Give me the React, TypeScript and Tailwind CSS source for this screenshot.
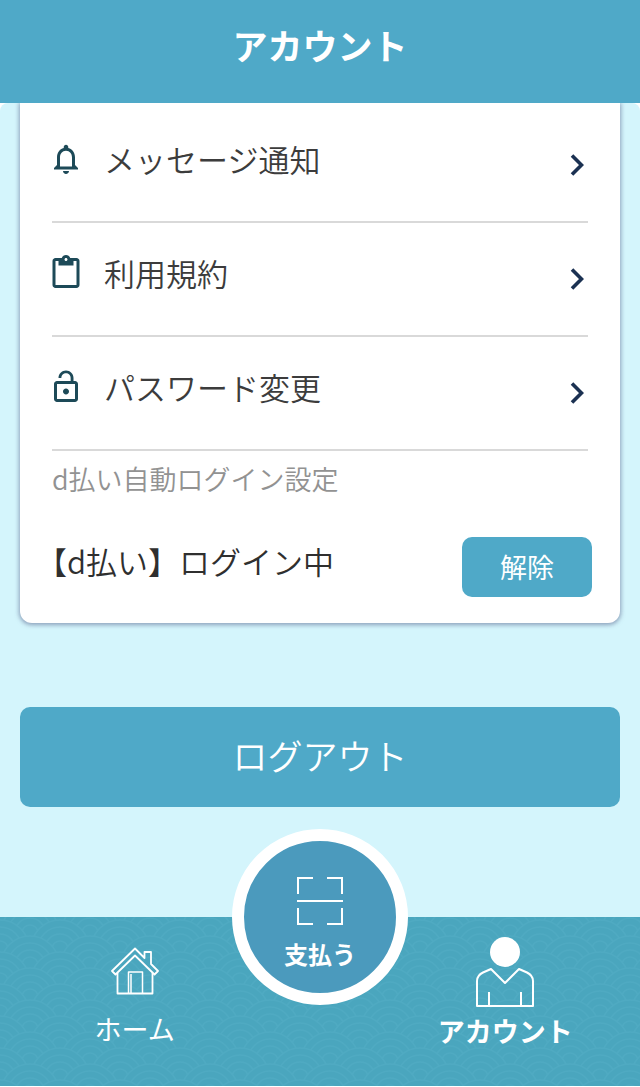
import type { ComponentType, ReactNode } from "react";
import { MdContentPaste, MdLockOpen, MdNotificationsNone } from "react-icons/md";

type MenuItem = {
  label: string;
  icon: ComponentType<{ className?: string }>;
};

const menuItems: MenuItem[] = [
  { label: "メッセージ通知", icon: MdNotificationsNone },
  { label: "利用規約", icon: MdContentPaste },
  { label: "パスワード変更", icon: MdLockOpen },
];

function Chevron() {
  return (
    <svg viewBox="0 0 14 24" className="mt-3 mr-1 h-6 w-3.5 shrink-0 text-[#1b3152]" fill="none" aria-hidden="true">
      <path d="M2 2.5 11.5 12 2 21.5" stroke="currentColor" strokeWidth="3.6" />
    </svg>
  );
}

function MenuRow({ label, icon: Icon }: MenuItem) {
  return (
    <li className="mr-1 border-b-2 border-[#d9d9d9]">
      <a href="#" className="flex h-28 items-center pb-3">
        <Icon className="-ml-1 size-9 shrink-0 text-[#1d4a58]" />
        <span className="ml-5 flex-1 text-[31px] leading-10 text-[#3c3c3c]">{label}</span>
        <Chevron />
      </a>
    </li>
  );
}

function HomeIcon() {
  return (
    <svg viewBox="0 0 48 50" className="h-[50px] w-12" fill="none" stroke="currentColor" strokeWidth="1.8" strokeLinejoin="round" aria-hidden="true">
      <path d="M24 1.5 1 24l3.500 3.500L24 8.500l19.500 19L47 24l-7-7V5h-6.500v6z" />
      <path d="M6.500 26v20.500h35V26" />
      <path d="M17.500 46.500V25H31.500V46.500M20 46.500V27" strokeWidth="1.5" />
    </svg>
  );
}

function PersonIcon() {
  return (
    <svg viewBox="0 0 58 70" className="h-[70px] w-[58px]" fill="none" stroke="currentColor" strokeWidth="2" strokeLinejoin="round" aria-hidden="true">
      <circle cx="29" cy="15" r="15" fill="currentColor" stroke="none" />
      <path d="M1 69V44c0-5 3-7 6-8.500l8-3.500 14 14 14-14 8 3.500c3 1.500 6 3.500 6 8.500v25zM13 69V55M45 69V55" />
    </svg>
  );
}

function ScanIcon() {
  return (
    <svg viewBox="0 0 48 50" className="h-[50px] w-12" fill="none" stroke="currentColor" strokeWidth="2" aria-hidden="true">
      <path d="M2 18V2h15M31 2h15v16M2 32v16h15M31 48h15V32M1 25h46" />
    </svg>
  );
}

// Overlapping wave scales behind the bottom navigation
function WavePattern() {
  return (
    <svg className="absolute inset-0 size-full" aria-hidden="true">
      <defs>
        <g id="scale" fill="#4aa6be" stroke="#57b0c8" strokeWidth="1.5">
          <circle r="29" />
          <circle r="22" />
          <circle r="15" />
          <circle r="8" />
        </g>
        <pattern id="waves" width="60" height="32" patternUnits="userSpaceOnUse">
          <use href="#scale" x="0" y="0" />
          <use href="#scale" x="60" y="0" />
          <use href="#scale" x="30" y="16" />
          <use href="#scale" x="0" y="32" />
          <use href="#scale" x="60" y="32" />
          <use href="#scale" x="30" y="48" />
        </pattern>
      </defs>
      <rect width="100%" height="100%" fill="url(#waves)" opacity="0.4" />
    </svg>
  );
}

function NavLink({ children, active }: { children: ReactNode; active?: boolean }) {
  return (
    <a
      href="#"
      aria-current={active ? "page" : undefined}
      className={
        active
          ? "flex h-[130px] flex-col items-center justify-end whitespace-nowrap text-[27px] leading-8 font-bold"
          : "flex h-[130px] flex-col items-center justify-end whitespace-nowrap text-[27px] leading-8"
      }
    >
      {children}
    </a>
  );
}

export default function App() {
  return (
    <div className="flex min-h-screen flex-col bg-white font-['Noto_Sans_CJK_JP',sans-serif] font-[350]">
      <header className="flex h-[103px] items-center justify-center bg-[#4fa9c8] pb-3.5">
        <h1 className="text-[35px] leading-10 font-bold text-white">アカウント</h1>
      </header>

      <main className="flex-1 rounded-t-lg bg-[#d4f5fc] px-5 pb-[110px]">
        <section className="rounded-b-xl bg-white pt-1.5 pr-7 pb-[26px] pl-8 shadow-[0_1px_4px_1px_rgba(110,125,160,0.7)] [clip-path:inset(0_-12px_-12px_-12px)]">
          <ul>
            {menuItems.map((item) => (
              <MenuRow key={item.label} {...item} />
            ))}
          </ul>
          <h2 className="mt-2 text-[27px] leading-10 text-[#929292]">d払い自動ログイン設定</h2>
          <div className="mt-[38px] flex items-center justify-between">
            <p className="-ml-4 pb-3 text-[31px] leading-10 text-[#2f2f2f]">【d払い】ログイン中</p>
            <button type="button" className="h-[60px] w-[130px] rounded-[10px] bg-[#4fa9c8] text-[27px] font-normal text-white">
              解除
            </button>
          </div>
        </section>

        <button type="button" className="mt-[84px] h-[100px] w-full rounded-[10px] bg-[#4fa9c8] pb-1 text-[35px] text-white">
          ログアウト
        </button>
      </main>

      <nav className="relative mb-px grid h-[169px] grid-cols-3 bg-[#4aa6be] px-[42px] font-normal text-white">
        <WavePattern />
        <div className="relative">
          <NavLink>
            <HomeIcon />
            <span className="mt-4 mb-0.5">ホーム</span>
          </NavLink>
        </div>
        <div className="relative flex justify-center">
          <button
            type="button"
            className="-mt-[88px] flex size-44 shrink-0 flex-col items-center rounded-full border-[12px] border-white bg-[#4b9abd] pt-[35px] text-2xl leading-8 font-bold"
          >
            <ScanIcon />
            <span className="mt-3">支払う</span>
          </button>
        </div>
        <div className="relative">
          <NavLink active>
            <PersonIcon />
            <span className="mt-2">アカウント</span>
          </NavLink>
        </div>
      </nav>
    </div>
  );
}
